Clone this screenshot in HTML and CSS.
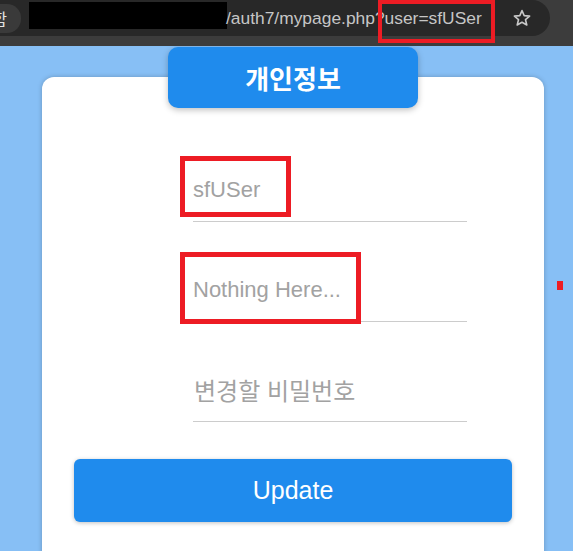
FILE: index.html
```html
<!DOCTYPE html>
<html lang="ko">
<head>
<meta charset="utf-8">
<title>mypage</title>
<link rel="stylesheet" href="styles.css">
</head>
<body>
<div class="chrome">
  <div class="omnibox">
    <span class="chip"><span class="chip-text">함</span></span>
    <span class="redact"></span>
    <span class="url">/auth7/mypage.php?user=sfUSer</span>
    <svg class="star" width="20" height="18" viewBox="0 0 20 18">
      <path d="M10 1.6 L12.2 6.6 L17.6 7.1 L13.5 10.7 L14.8 16 L10 13.2 L5.2 16 L6.5 10.7 L2.4 7.1 L7.8 6.6 Z" fill="none" stroke="#c8c8c8" stroke-width="1.6" stroke-linejoin="round"/>
    </svg>
  </div>
</div>
<div class="page">
  <div class="card">
    <div class="title">개인정보</div>
    <form class="form">
      <input class="field" type="text" placeholder="sfUSer">
      <input class="field" type="text" placeholder="Nothing Here...">
      <input class="field field-ko" type="password" placeholder="변경할 비밀번호">
      <button class="update" type="button">Update</button>
    </form>
  </div>
</div>
<div class="mark mark-url"></div>
<div class="mark mark-user"></div>
<div class="mark mark-nothing"></div>
<div class="dot"></div>
</body>
</html>
```

FILE: styles.css
```css
html, body {
  margin: 0;
  padding: 0;
  background: #ffffff;
}

body {
  width: 573px;
  height: 558px;
  overflow: hidden;
  position: relative;
  font-family: "Liberation Sans", "Noto Sans CJK KR", sans-serif;
}

.chrome {
  height: 46px;
  background: #3c3c3c;
}

.omnibox {
  height: 36px;
  width: 550px;
  background: #282828;
  border-radius: 0 18px 18px 0;
  display: flex;
  align-items: center;
}

.chip {
  width: 21px;
  height: 29px;
  background: #3a3a3a;
  border-radius: 0 14px 14px 0;
  overflow: hidden;
  display: flex;
  align-items: center;
  justify-content: flex-end;
  padding-right: 14px;
  box-sizing: border-box;
}

.chip-text {
  flex: none;
  color: #e4e4e4;
  font-family: "Noto Sans CJK KR", sans-serif;
  font-size: 16px;
  line-height: 1;
}

.redact {
  align-self: flex-start;
  margin-top: 2px;
  margin-left: 8px;
  width: 198px;
  height: 27px;
  background: #000000;
}

.url {
  color: #c6c6c6;
  font-size: 17.4px;
  line-height: 20px;
  white-space: nowrap;
  margin-left: -1px;
}

.star {
  margin-left: auto;
  margin-right: 18px;
  flex: none;
}

.page {
  height: 505px;
  box-sizing: border-box;
  background: #87bff5;
  padding: 31px 0 0 42px;
  overflow: hidden;
}

.card {
  width: 502px;
  height: 520px;
  background: #ffffff;
  border-radius: 12px;
  box-shadow: 0 0 5px rgba(0, 0, 0, 0.22);
  display: flex;
  flex-direction: column;
  padding: 0 32px;
  box-sizing: border-box;
}

.title {
  width: 250px;
  height: 61px;
  margin: -30px auto 0;
  background: #1f8bed;
  border-radius: 10px;
  box-shadow: 0 2px 6px rgba(0, 0, 0, 0.25);
  color: #ffffff;
  font-family: "Noto Sans CJK KR", sans-serif;
  font-weight: 700;
  font-size: 26px;
  display: flex;
  align-items: center;
  justify-content: center;
  flex: none;
}

.form {
  margin: 50px 0 0;
  display: flex;
  flex-direction: column;
  gap: 36px;
}

.field {
  margin: 0 0 0 119px;
  width: 274px;
  height: 64px;
  box-sizing: border-box;
  border: none;
  border-bottom: 1px solid #cccccc;
  padding: 0;
  background: transparent;
  outline: none;
  font-family: "Liberation Sans", "Noto Sans CJK KR", sans-serif;
  font-size: 22px;
  color: #333333;
}

.field-ko {
  font-family: "Noto Sans CJK KR", sans-serif;
  font-size: 24px;
  padding-left: 1px;
}

.field::placeholder {
  color: #a2a2a2;
  opacity: 1;
}

.update {
  margin-top: 1px;
  width: 438px;
  height: 63px;
  border: none;
  border-radius: 6px;
  background: #1f8bed;
  box-shadow: 0 1px 4px rgba(0, 0, 0, 0.25);
  color: #ffffff;
  font-family: "Liberation Sans", sans-serif;
  font-size: 25px;
  padding: 0;
}

.mark {
  position: absolute;
  border: 5px solid #ed1c24;
  box-sizing: border-box;
}

.mark-url {
  left: 378px;
  top: 0;
  width: 117px;
  height: 43px;
  border-width: 4px;
}

.mark-user {
  left: 180px;
  top: 156px;
  width: 111px;
  height: 61px;
}

.mark-nothing {
  left: 180px;
  top: 252px;
  width: 181px;
  height: 72px;
}

.dot {
  position: absolute;
  left: 557px;
  top: 281px;
  width: 6px;
  height: 9px;
  background: #ed1c24;
}
```
